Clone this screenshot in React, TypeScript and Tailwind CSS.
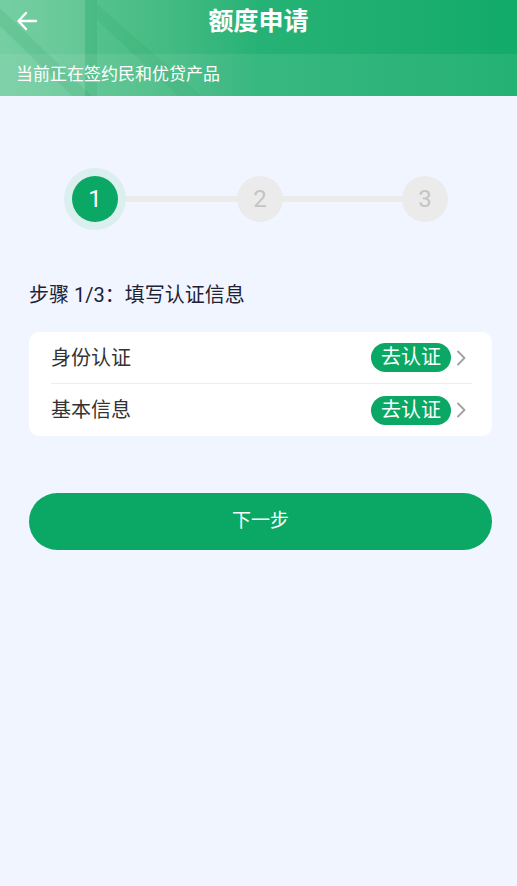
import React from "react";

const font = { fontFamily: "Roboto, 'Noto Sans CJK SC', sans-serif" };

function Chevron() {
  return (
    <svg width="21" height="20" viewBox="0 0 21 20">
      <path d="M7 3.5 L13.5 10 L7 16.5" fill="none" stroke="#a3a3a3" strokeWidth="1.9" strokeLinecap="round" strokeLinejoin="round" />
    </svg>
  );
}

function Row({ label, last }: { label: string; last?: boolean }) {
  return (
    <div className="ml-[22px] mr-[20px] h-[52px] flex items-center justify-between" style={last ? {} : { borderBottom: "1px solid #ededed" }}>
      <span className="text-[20px] text-[#333333]">{label}</span>
      <div className="flex items-center">
        <span className="h-[29px] px-[10px] rounded-full bg-[#0aa864] text-white text-[20px] leading-[29px]">去认证</span>
        <Chevron />
      </div>
    </div>
  );
}

export default function App() {
  return (
    <div className="w-[517px] h-[886px] bg-[#f0f5ff]" style={font}>
      <div className="relative h-[96px] overflow-hidden bg-gradient-to-r from-[#6acb9a] via-[#26b276] to-[#12ab69]">
        <svg className="absolute inset-0" width="517" height="96" viewBox="0 0 517 96">
          <polygon points="0,0 85,0 85,96 0,96" fill="rgba(255,255,255,0.08)" />
          <polygon points="85,0 97,0 97,96 85,96" fill="rgba(0,130,70,0.12)" />
          <polygon points="0,8 0,26 72,96 92,96" fill="rgba(0,130,70,0.10)" />
          <polygon points="97,4 97,20 178,96 202,96" fill="rgba(0,130,70,0.08)" />
        </svg>
        <div className="relative h-[54px] flex items-center justify-center">
          <svg className="absolute left-[16px] top-[10px]" width="22" height="22" viewBox="0 0 22 22">
            <path d="M20 11 H3 M10 3 L2.5 11 L10 19" fill="none" stroke="#fff" strokeWidth="2.4" strokeLinecap="round" strokeLinejoin="round" />
          </svg>
          <span className="text-white text-[25px] font-bold -mt-[10px]">额度申请</span>
        </div>
        <div className="relative h-[42px] bg-white/[0.08] flex items-center pl-[16px]">
          <span className="text-white text-[17px]">当前正在签约民和优贷产品</span>
        </div>
      </div>

      <div className="pl-[29px] pr-[25px]">
        <div className="relative mt-[72px] h-[62px] flex items-center pl-[43px] gap-[119px]">
          <div className="absolute left-[66px] w-[330px] top-[28px] h-[6px] bg-[#ebebeb]" />
          <div className="relative w-[46px] h-[46px] rounded-full bg-[#0aa864] text-white text-[24px] flex items-center justify-center" style={{ boxShadow: "0 0 0 8px #dbefef" }}>1</div>
          <div className="relative w-[46px] h-[46px] rounded-full bg-[#ebebeb] text-[#c4c4c4] text-[24px] flex items-center justify-center">2</div>
          <div className="relative w-[46px] h-[46px] rounded-full bg-[#ebebeb] text-[#c4c4c4] text-[24px] flex items-center justify-center">3</div>
        </div>

        <div className="mt-[51px] text-[20px] text-[#1e2235] leading-[28px]">步骤 1/3：填写认证信息</div>

        <div className="mt-[23px] bg-white rounded-[10px]">
          <Row label="身份认证" />
          <Row label="基本信息" last />
        </div>

        <button className="mt-[57px] w-full h-[57px] rounded-full bg-[#0aa864] text-white text-[19px]">下一步</button>
      </div>
    </div>
  );
}
